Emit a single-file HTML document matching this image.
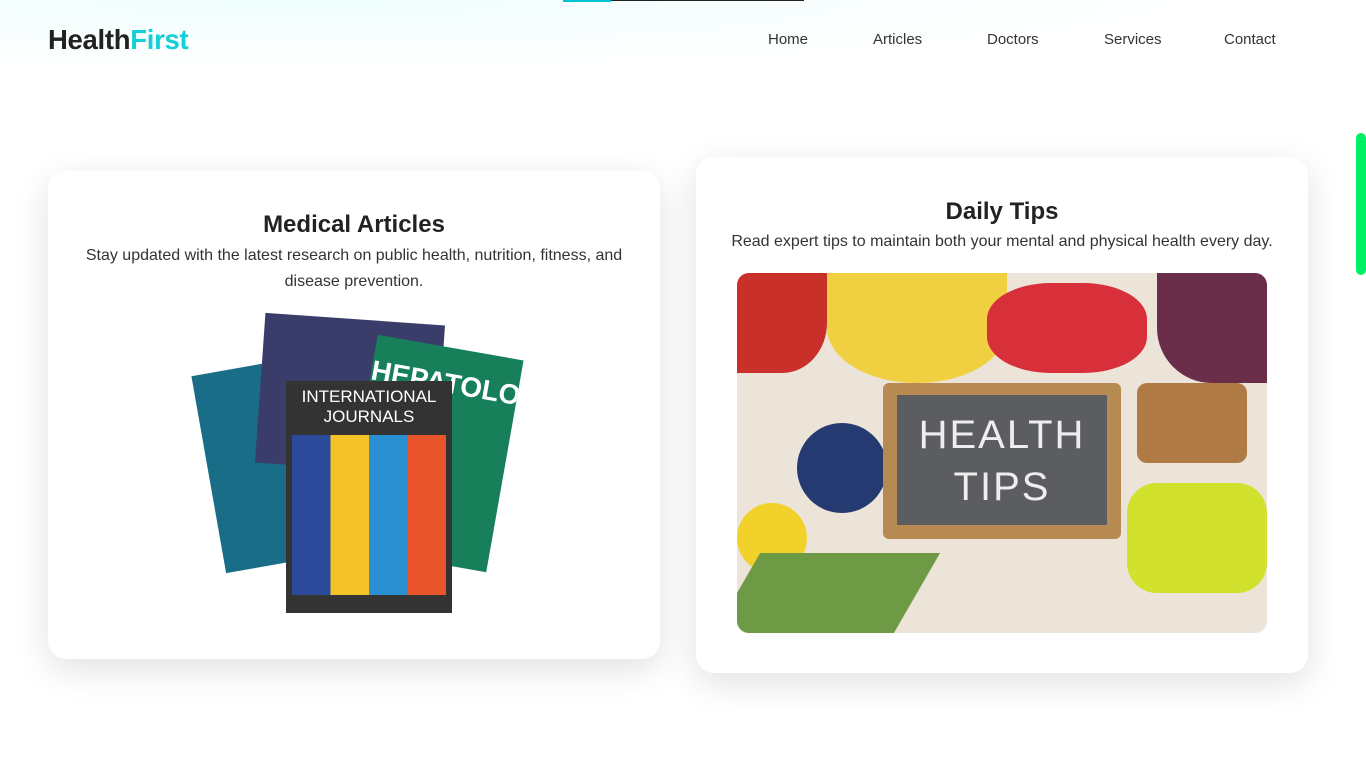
<!DOCTYPE html>
<html><head><meta charset="utf-8"><style>
*{margin:0;padding:0;box-sizing:border-box}
body{width:1366px;height:768px;overflow:hidden;background:#fff;font-family:"Liberation Sans",sans-serif;position:relative;color:#222}
.topglow{position:absolute;left:0;top:0;width:1366px;height:80px;background:radial-gradient(ellipse 900px 70px at 300px 0,#effefe 0%,#f7fefe 50%,rgba(255,255,255,0) 100%);}
.line1{position:absolute;left:563px;top:0;width:48px;height:2px;background:#00c4d4}
.line2{position:absolute;left:611px;top:0;width:193px;height:1px;background:#222}
.logo{position:absolute;left:48px;top:24px;font-size:27.5px;font-weight:bold;letter-spacing:-0.3px}
.logo span{color:#13cfd9}
nav{position:absolute;top:31px;font-size:15px;color:#333}
.card{position:absolute;background:#fff;border-radius:18px;box-shadow:0 10px 35px rgba(0,0,0,.12);text-align:center}
h2{font-size:24px;font-weight:bold;color:#222}
p{font-size:16px;color:#333;line-height:26px}
.bar{position:absolute;left:1356px;top:133px;width:10px;height:142px;border-radius:5px;background:#00f065}
</style></head><body>
<div class="topglow"></div><div class="line1"></div><div class="line2"></div>
<div class="logo">Health<span>First</span></div>
<nav style="left:768px">Home</nav><nav style="left:873px">Articles</nav><nav style="left:987px">Doctors</nav><nav style="left:1104px">Services</nav><nav style="left:1224px">Contact</nav>

<div class="card" style="left:48px;top:171px;width:612px;height:488px">
<h2 style="margin-top:40px">Medical Articles</h2>
<p style="margin:4px 30px 0">Stay updated with the latest research on public health, nutrition, fitness, and disease prevention.</p>
<div style="position:absolute;left:160px;top:195px;width:100px;height:200px;background:#1a6d86;transform:rotate(-10deg);"></div>
<div style="position:absolute;left:212px;top:148px;width:180px;height:150px;background:#3a3d6a;transform:rotate(4deg)"></div>
<div style="position:absolute;left:310px;top:175px;width:148px;height:215px;background:#17805a;transform:rotate(10deg);color:#fff;font-size:28px;font-weight:bold;padding-top:20px;overflow:hidden">HEPATOLOGY</div>
<div style="position:absolute;left:238px;top:210px;width:166px;height:232px;background:#333;color:#fff;font-size:17px;padding-top:6px">INTERNATIONAL<br>JOURNALS
<div style="margin:8px 6px;height:160px;background:linear-gradient(90deg,#2b4b9a 25%,#f5c22a 25% 50%,#2a8fd1 50% 75%,#e9542a 75%)"></div></div>
</div>

<div class="card" style="left:696px;top:157px;width:612px;height:516px">
<h2 style="margin-top:41px">Daily Tips</h2>
<p style="margin-top:3px">Read expert tips to maintain both your mental and physical health every day.</p>
<div style="position:absolute;left:41px;top:116px;width:530px;height:360px;border-radius:12px;overflow:hidden;background:#ece4d8">
<div style="position:absolute;left:0;top:0;width:90px;height:100px;background:#c9302a;border-radius:0 0 50% 0"></div>
<div style="position:absolute;left:90px;top:0;width:180px;height:110px;background:#f0d040;border-radius:0 0 50% 50%"></div>
<div style="position:absolute;left:420px;top:0;width:110px;height:110px;background:#6a2d4a;border-radius:0 0 0 50%"></div>
<div style="position:absolute;left:250px;top:10px;width:160px;height:90px;background:#d7303a;border-radius:40%"></div>
<div style="position:absolute;left:60px;top:150px;width:90px;height:90px;background:#253a70;border-radius:50%"></div>
<div style="position:absolute;left:0;top:230px;width:70px;height:70px;background:#f2d22a;border-radius:50%"></div>
<div style="position:absolute;left:146px;top:110px;width:238px;height:156px;background:#b78a52;border-radius:6px"></div>
<div style="position:absolute;left:160px;top:122px;width:210px;height:130px;background:#5b5d60;color:#eee;font-size:40px;letter-spacing:2px;line-height:52px;padding-top:14px">HEALTH<br>TIPS</div>
<div style="position:absolute;left:0;top:280px;width:180px;height:80px;background:#6f9a45;transform:skewX(-30deg)"></div>
<div style="position:absolute;left:390px;top:210px;width:140px;height:110px;background:#d2e12e;border-radius:30px"></div>
<div style="position:absolute;left:400px;top:110px;width:110px;height:80px;background:#b07a45;border-radius:10px"></div>
</div>
</div>
<div class="bar"></div>
</body></html>
